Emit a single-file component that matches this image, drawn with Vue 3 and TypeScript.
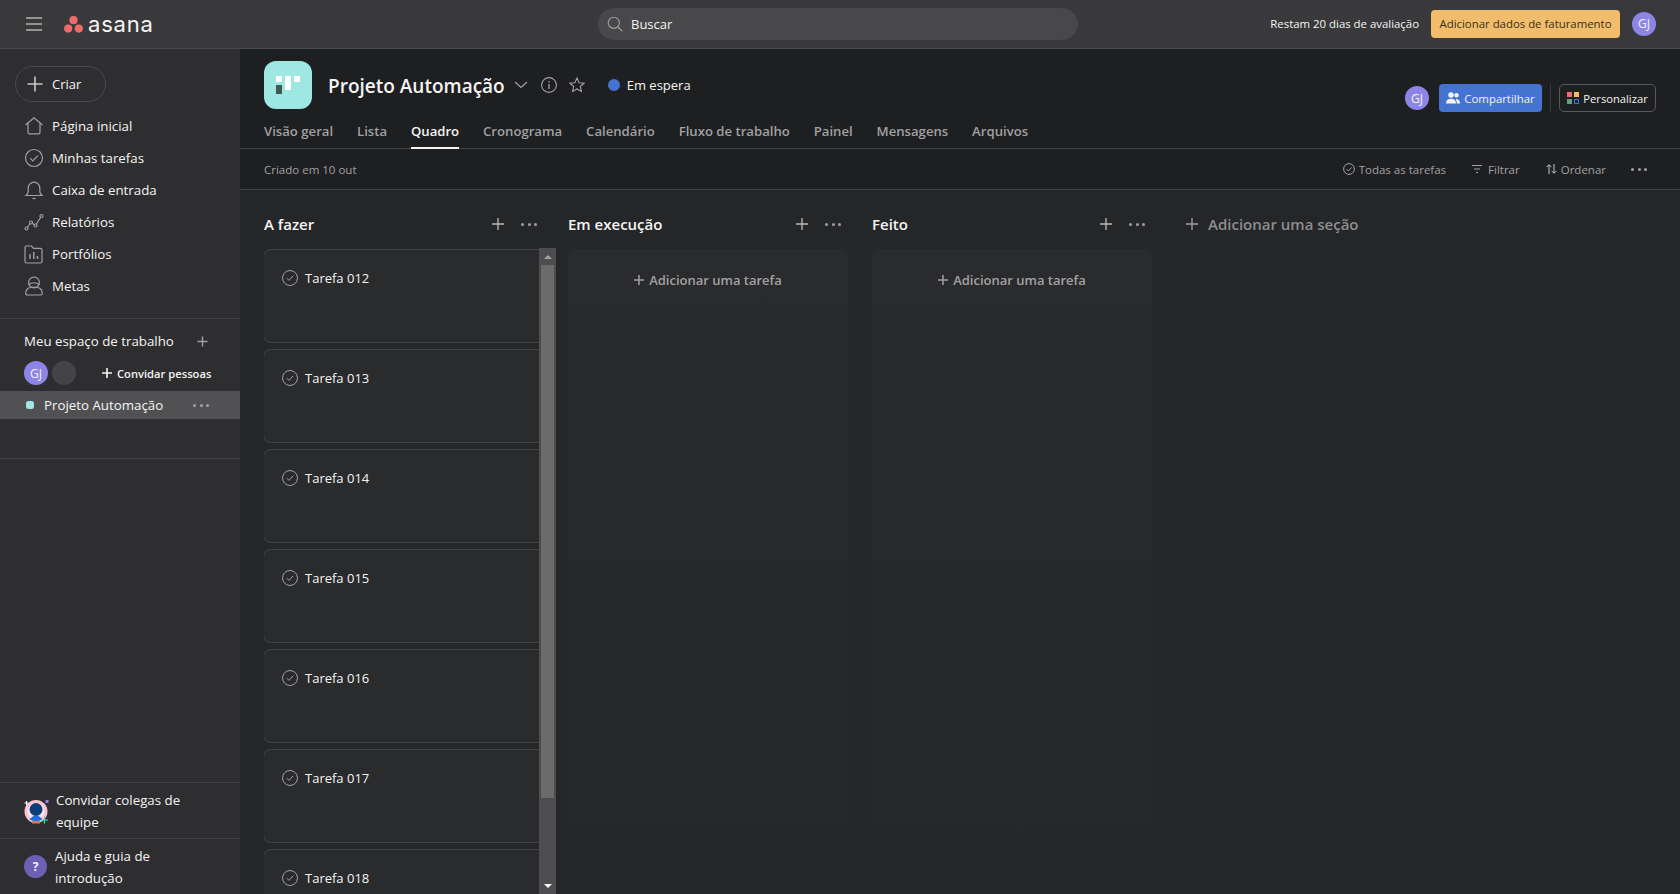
<script setup lang="ts">
const navItems = [
  { label: 'Página inicial', icon: 'home' },
  { label: 'Minhas tarefas', icon: 'check' },
  { label: 'Caixa de entrada', icon: 'bell' },
  { label: 'Relatórios', icon: 'chart' },
  { label: 'Portfólios', icon: 'folder' },
  { label: 'Metas', icon: 'goal' },
]

const tabs = ['Visão geral', 'Lista', 'Quadro', 'Cronograma', 'Calendário', 'Fluxo de trabalho', 'Painel', 'Mensagens', 'Arquivos']

const tasks = ['Tarefa 012', 'Tarefa 013', 'Tarefa 014', 'Tarefa 015', 'Tarefa 016', 'Tarefa 017', 'Tarefa 018']

const emptyColumns = ['Em execução', 'Feito']
</script>

<template>
  <div class="app">
    <header class="topbar">
      <div class="top-left">
        <svg class="burger" width="16" height="14" viewBox="0 0 16 14">
          <path d="M0 1h16M0 7h16M0 13h16" stroke="#f0f0f0" stroke-width="1" fill="none" />
        </svg>
        <div class="logo">
          <svg width="19" height="17" viewBox="0 0 19 17">
            <circle cx="9.5" cy="4.2" r="4.1" fill="#f06a6a" />
            <circle cx="4.2" cy="12.6" r="4.1" fill="#f06a6a" />
            <circle cx="14.8" cy="12.6" r="4.1" fill="#f06a6a" />
          </svg>
          <span class="wordmark">asana</span>
        </div>
      </div>
      <div class="search">
        <svg width="16" height="16" viewBox="0 0 16 16" fill="none" stroke="#a2a0a2" stroke-width="1.1">
          <circle cx="6.8" cy="6.8" r="5.6" />
          <path d="M11 11l4.4 4.4" />
        </svg>
        <span>Buscar</span>
      </div>
      <div class="top-right">
        <span class="trial">Restam 20 dias de avaliação</span>
        <button class="billing">Adicionar dados de faturamento</button>
        <span class="avatar">GJ</span>
      </div>
    </header>

    <div class="body">
      <aside class="sidebar">
        <div class="sidebar-top">
          <button class="create">
            <svg width="16" height="16" viewBox="0 0 16 16"><path d="M8 .5v15M.5 8h15" stroke="#c8c8c8" stroke-width="1.6" /></svg>
            <span>Criar</span>
          </button>
          <nav class="nav">
            <a v-for="item in navItems" :key="item.label" class="nav-item">
              <svg width="20" height="20" viewBox="0 0 20 20" fill="none" stroke="#a2a0a2" stroke-width="1.2">
                <path v-if="item.icon === 'home'" d="M1.5 9 10 1.8 18.5 9M4 7v9.2q0 1.6 1.6 1.6h8.8q1.6 0 1.6-1.6V7" />
                <template v-else-if="item.icon === 'check'">
                  <circle cx="10" cy="10" r="8.5" />
                  <path d="M6.2 10.2 8.8 12.8 13.8 7.6" />
                </template>
                <template v-else-if="item.icon === 'bell'">
                  <path d="M2 15.5q2.2-1.6 2.2-4.5V8a5.8 5.8 0 0 1 11.6 0v3q0 2.9 2.2 4.5Z" />
                  <path d="M8.5 18.5h3" />
                </template>
                <template v-else-if="item.icon === 'chart'">
                  <path d="M2.5 16.5 7 10.5 11.5 13.5 17.5 4" />
                  <circle cx="2.5" cy="16.5" r="1.5" fill="#2e2e30" />
                  <circle cx="7" cy="10.5" r="1.5" fill="#2e2e30" />
                  <circle cx="11.5" cy="13.5" r="1.5" fill="#2e2e30" />
                  <circle cx="17.5" cy="4" r="1.5" fill="#2e2e30" />
                </template>
                <template v-else-if="item.icon === 'folder'">
                  <path d="M2.5 2h5l2 2.4h7q1.5 0 1.5 1.5v11.6q0 1.5-1.5 1.5h-14Q1 19 1 17.5v-14Q1 2 2.5 2Z" />
                  <path d="M6 15v-5M9.8 15V8M13.5 15v-3" stroke-width="1.4" />
                </template>
                <template v-else>
                  <circle cx="10" cy="6.5" r="5.4" />
                  <path d="M4.5 8.5q5.500-3.500 11 0" />
                  <path d="M3.5 19q-1.8 0-1.8-1.8 0-6.2 8.3-6.2t8.3 6.2q0 1.8-1.8 1.8Z" />
                </template>
              </svg>
              <span>{{ item.label }}</span>
            </a>
          </nav>
          <div class="workspace">
            <div class="workspace-title">
              <span>Meu espaço de trabalho</span>
              <svg width="11" height="11" viewBox="0 0 11 11"><path d="M5.5 .5v10M.5 5.5h10" stroke="#a2a0a2" stroke-width="1.4" /></svg>
            </div>
            <div class="workspace-people">
              <span class="avatar">GJ</span>
              <span class="avatar ghost"></span>
              <span class="invite">
                <svg width="10" height="10" viewBox="0 0 10 10"><path d="M5 0v10M0 5h10" stroke="#f5f4f3" stroke-width="1.6" /></svg>
                Convidar pessoas
              </span>
            </div>
            <div class="project-row">
              <span class="project-dot"></span>
              <span class="project-name">Projeto Automação</span>
              <span class="dots small">
                <i></i><i></i><i></i>
              </span>
            </div>
          </div>
        </div>
        <div class="sidebar-bottom">
          <div class="bottom-row">
            <svg class="invite-art" width="26" height="26" viewBox="0 0 26 26">
              <circle cx="12" cy="13.5" r="10" fill="#f9e4ea" stroke="#f9c4d2" stroke-width="3" />
              <circle cx="12" cy="11.5" r="6.5" fill="#0b3f7a" />
              <path d="M5.5 21.5q6.5-8 13 0-6.500 3-13 0Z" fill="#1272e0" />
              <path d="M8 23h8v2.5H8z" fill="#f06a6a" />
              <path d="M2.5 3v4M.5 5h4" stroke="#fff" stroke-width="1" />
              <rect x="21.5" y="2" width="3" height="3" fill="#8d84e8" />
              <path d="M20.5 18.5v7M17 22h7" stroke="#3ee0b8" stroke-width="1.2" />
            </svg>
            <span>Convidar colegas de equipe</span>
          </div>
          <div class="bottom-row help">
            <span class="help-mark">?</span>
            <span>Ajuda e guia de introdução</span>
          </div>
        </div>
      </aside>

      <main class="main">
        <section class="project-head">
          <div class="head-top">
            <div class="project-id">
              <div class="project-icon">
                <svg width="48" height="48" viewBox="0 0 48 48">
                  <rect x="12" y="15" width="6" height="6" fill="#fff" />
                  <rect x="21" y="15" width="6" height="14" fill="#fff" />
                  <rect x="30" y="15" width="6" height="6" fill="#fff" />
                  <rect x="12" y="24" width="6" height="9" fill="#3d5a58" />
                </svg>
              </div>
              <h1>Projeto Automação</h1>
              <svg class="chev" width="14" height="8" viewBox="0 0 14 8" fill="none"><path d="M1 1l6 5.5L13 1" stroke="#a2a0a2" stroke-width="1.2" /></svg>
              <svg class="head-ic" width="16" height="16" viewBox="0 0 16 16" fill="none" stroke="#a2a0a2" stroke-width="1.1">
                <circle cx="8" cy="8" r="7.4" />
                <path d="M8 7v5M8 4v1.4" stroke-width="1.3" />
              </svg>
              <svg class="head-ic" width="16" height="16" viewBox="0 0 16 16" fill="none" stroke="#a2a0a2" stroke-width="1.1">
                <path d="M8 1l2.1 4.7 5 .5-3.800 3.300 1.100 5L8 12l-4.400 2.500 1.100-5L.9 6.200l5-.5Z" />
              </svg>
              <span class="status"><i></i>Em espera</span>
            </div>
            <div class="head-actions">
              <span class="avatar">GJ</span>
              <button class="share">
                <svg width="14" height="12" viewBox="0 0 14 12" fill="#f5f4f3">
                  <circle cx="5" cy="3" r="2.7" />
                  <path d="M0 11.5q0-4.8 5-4.8t5 4.8Z" />
                  <circle cx="10.5" cy="3.2" r="2.2" />
                  <path d="M10.8 11.5H14q0-4.500-4.300-4.500 1.100 1.700 1.100 4.500Z" />
                </svg>
                Compartilhar
              </button>
              <span class="head-sep"></span>
              <button class="customize">
                <svg width="12" height="12" viewBox="0 0 12 12">
                  <rect width="5" height="5" fill="#f06a6a" />
                  <rect x="7" width="5" height="5" fill="#f1bd6c" />
                  <rect y="7" width="5" height="5" fill="#5da283" />
                  <rect x="7.5" y="7.5" width="4" height="4" fill="none" stroke="#4573d2" />
                </svg>
                Personalizar
              </button>
            </div>
          </div>
          <nav class="tabs">
            <a v-for="tab in tabs" :key="tab" class="tab" :class="{ active: tab === 'Quadro' }">{{ tab }}</a>
          </nav>
        </section>

        <section class="toolbar">
          <span>Criado em 10 out</span>
          <div class="tools">
            <span class="tool">
              <svg width="12" height="12" viewBox="0 0 12 12" fill="none" stroke="#a2a0a2" stroke-width="1">
                <circle cx="6" cy="6" r="5.4" />
                <path d="M3.6 6.2 5.3 7.9 8.5 4.5" />
              </svg>
              Todas as tarefas
            </span>
            <span class="tool filter">
              <svg width="10" height="8" viewBox="0 0 10 8"><path d="M0 .5h10M2 4h6M4 7.5h2" stroke="#a2a0a2" stroke-width="1" /></svg>
              Filtrar
            </span>
            <span class="tool sort">
              <svg width="11" height="10" viewBox="0 0 11 10" fill="none"><path d="M3 10V1M.5 3.2 3 .7l2.5 2.5M8 0v9M5.500 6.800 8 9.300l2.500-2.500" stroke="#c4c4c4" stroke-width="1" /></svg>
              Ordenar
            </span>
            <span class="dots"><i></i><i></i><i></i></span>
          </div>
        </section>

        <section class="board">
          <div class="column first">
            <div class="column-head">
              <h2>A fazer</h2>
              <svg width="12" height="12" viewBox="0 0 12 12"><path d="M6 0v12M0 6h12" stroke="#b8b8b8" stroke-width="1.3" /></svg>
              <span class="dots"><i></i><i></i><i></i></span>
            </div>
            <div class="column-body">
              <div class="cards">
                <article v-for="task in tasks" :key="task" class="card">
                  <svg width="16" height="16" viewBox="0 0 16 16" fill="none" stroke="#a2a0a2" stroke-width="1">
                    <circle cx="8" cy="8" r="7.5" />
                    <path d="M4.8 8.2 7 10.4 11.2 5.8" />
                  </svg>
                  <span>{{ task }}</span>
                </article>
              </div>
              <div class="scrollbar">
                <span class="arrow up"></span>
                <span class="thumb"></span>
                <span class="arrow down"></span>
              </div>
            </div>
          </div>

          <div v-for="col in emptyColumns" :key="col" class="column">
            <div class="column-head">
              <h2>{{ col }}</h2>
              <svg width="12" height="12" viewBox="0 0 12 12"><path d="M6 0v12M0 6h12" stroke="#b8b8b8" stroke-width="1.3" /></svg>
              <span class="dots"><i></i><i></i><i></i></span>
            </div>
            <div class="empty-body">
              <span class="add-task">
                <svg width="10" height="10" viewBox="0 0 10 10"><path d="M5 0v10M0 5h10" stroke="#a2a0a2" stroke-width="1.5" /></svg>
                Adicionar uma tarefa
              </span>
            </div>
          </div>

          <div class="add-section">
            <svg width="12" height="12" viewBox="0 0 12 12"><path d="M6 0v12M0 6h12" stroke="#a2a0a2" stroke-width="1.3" /></svg>
            Adicionar uma seção
          </div>
        </section>
      </main>
    </div>
  </div>
</template>

<style>
html,
body {
  margin: 0;
  background: #1e1f21;
  overflow: hidden;
}
</style>

<style scoped>
.app {
  width: 1680px;
  height: 894px;
  display: flex;
  flex-direction: column;
  overflow: hidden;
  font-family: "Open Sans", "Noto Sans", sans-serif;
  font-size: 13.3px;
  color: #f5f4f3;
}

svg {
  flex: none;
  display: block;
}

button {
  font: inherit;
  border: 0;
  cursor: pointer;
}

.topbar {
  flex: none;
  height: 49px;
  box-sizing: border-box;
  border-bottom: 1px solid #4a4a4c;
  background: #39393b;
  display: grid;
  grid-template-columns: 1fr 480px 1fr;
  align-items: center;
  padding-left: 26px;
  padding-right: 24px;
}

.top-left {
  display: flex;
  align-items: center;
  gap: 22px;
}

.logo {
  display: flex;
  align-items: center;
  gap: 5px;
}

.wordmark {
  font-family: Inter, sans-serif;
  font-size: 22px;
  line-height: 24px;
  letter-spacing: 0.8px;
  color: #f5f4f3;
  margin-top: -1px;
}

.search {
  height: 32px;
  width: 480px;
  margin-top: -1px;
  margin-left: -3px;
  box-sizing: border-box;
  padding-left: 9px;
  border-radius: 16px;
  background: #48484a;
  display: flex;
  align-items: center;
  gap: 8px;
  font-size: 13px;
}

.top-right {
  display: flex;
  align-items: center;
  justify-content: flex-end;
  gap: 12px;
  margin-top: -1px;
}

.trial {
  font-size: 11.4px;
  white-space: nowrap;
}

.billing {
  height: 28px;
  width: 189px;
  padding: 0;
  border-radius: 4px;
  background: #f1bd6c;
  color: #3a2f1c;
  font-size: 11.4px;
  white-space: nowrap;
}

.avatar {
  flex: none;
  width: 24px;
  height: 24px;
  border-radius: 50%;
  background: #8d84e8;
  color: #f5f4f3;
  font-size: 12px;
  display: flex;
  align-items: center;
  justify-content: center;
}

.avatar.ghost {
  background: #444446;
}

.body {
  flex: 1;
  min-height: 0;
  display: flex;
}

.sidebar {
  flex: none;
  width: 240px;
  background: #2e2e30;
  display: flex;
  flex-direction: column;
  justify-content: space-between;
}

.create {
  margin: 17px 0 0 15px;
  width: 91px;
  height: 36px;
  box-sizing: border-box;
  padding-left: 11px;
  border: 1px solid #4a4a4c;
  border-radius: 18px;
  background: transparent;
  color: #f5f4f3;
  display: flex;
  align-items: center;
  gap: 9px;
  font-size: 13px;
}

.nav {
  margin-top: 8px;
  padding-bottom: 16px;
  border-bottom: 1px solid #424244;
}

.nav-item {
  height: 32px;
  padding-left: 24px;
  display: flex;
  align-items: center;
  gap: 8px;
}

.workspace {
  padding-top: 10px;
  padding-bottom: 39px;
  border-bottom: 1px solid #424244;
}

.workspace-title {
  height: 24px;
  padding: 0 32px 0 24px;
  display: flex;
  align-items: center;
  justify-content: space-between;
}

.workspace-people {
  height: 24px;
  margin-top: 8px;
  padding-left: 24px;
  display: flex;
  align-items: center;
  gap: 4px;
}

.invite {
  margin-left: 22px;
  display: flex;
  align-items: center;
  gap: 5px;
  font-size: 11.2px;
  font-weight: 600;
  white-space: nowrap;
}

.project-row {
  height: 28px;
  margin-top: 6px;
  padding: 0 31px 0 26px;
  background: #515153;
  display: flex;
  align-items: center;
}

.project-dot {
  width: 8px;
  height: 8px;
  border-radius: 2.5px;
  background: #9ee7e3;
  margin-right: 10px;
}

.project-name {
  flex: 1;
}

.dots {
  display: flex;
  gap: 3.5px;
  align-items: center;
}

.dots i {
  width: 3px;
  height: 3px;
  border-radius: 50%;
  background: #a2a0a2;
}

.bottom-row {
  height: 56px;
  box-sizing: border-box;
  border-top: 1px solid #424244;
  padding: 0 24px;
  display: flex;
  align-items: center;
  gap: 8px;
  line-height: 22px;
}

.invite-art {
  margin-right: -2px;
}

.help-mark {
  flex: none;
  width: 23px;
  height: 23px;
  border-radius: 50%;
  background: #6d5fb3;
  font-size: 12px;
  font-weight: 700;
  display: flex;
  align-items: center;
  justify-content: center;
}

.main {
  flex: 1;
  min-width: 0;
  display: flex;
  flex-direction: column;
  background: #1e1f21;
}

.project-head {
  flex: none;
  height: 100px;
  box-sizing: border-box;
  border-bottom: 1px solid #424244;
  padding: 12px 24px 0;
  display: flex;
  flex-direction: column;
}

.head-top {
  height: 48px;
  display: flex;
  justify-content: space-between;
}

.project-id {
  display: flex;
  align-items: center;
}

.project-icon {
  width: 48px;
  height: 48px;
  border-radius: 12px;
  background: #9ee7e3;
  margin-right: 16px;
}

h1 {
  margin: 0 9px 0 0;
  font-size: 19px;
  font-weight: 600;
  line-height: 26px;
  padding-top: 2px;
  white-space: nowrap;
}

.chev {
  margin-right: 13px;
}

.head-ic {
  margin-right: 12px;
}

.status {
  display: flex;
  align-items: center;
  gap: 7px;
  margin-left: 11px;
  font-size: 13px;
}

.status i {
  width: 12px;
  height: 12px;
  border-radius: 50%;
  background: #4573d2;
}

.head-actions {
  margin-top: 23px;
  display: flex;
  align-items: center;
  height: 28px;
}

.share {
  margin-left: 10px;
  width: 103px;
  height: 28px;
  border-radius: 4px;
  background: #4573d2;
  color: #f5f4f3;
  font-size: 11.4px;
  display: flex;
  align-items: center;
  justify-content: center;
  gap: 4px;
}

.head-sep {
  width: 1px;
  height: 28px;
  background: #3a3a3c;
  margin: 0 8px;
}

.customize {
  width: 97px;
  height: 28px;
  box-sizing: border-box;
  border: 1px solid #58585a;
  border-radius: 5px;
  background: transparent;
  color: #f5f4f3;
  font-size: 11.2px;
  display: flex;
  align-items: center;
  justify-content: center;
  gap: 4px;
}

.tabs {
  margin-top: 8px;
  display: flex;
  gap: 23.9px;
}

.tab {
  height: 32px;
  box-sizing: border-box;
  padding-top: 3px;
  color: #a2a0a2;
  font-size: 13.15px;
  font-weight: 600;
  line-height: 22px;
  white-space: nowrap;
}

.tab.active {
  color: #f5f4f3;
  border-bottom: 2px solid #f5f4f3;
}

.toolbar {
  flex: none;
  height: 41px;
  box-sizing: border-box;
  border-bottom: 1px solid #424244;
  padding: 0 33px 0 24px;
  display: flex;
  align-items: center;
  justify-content: space-between;
  font-size: 11.5px;
  color: #a2a0a2;
}

.tools {
  display: flex;
  align-items: center;
}

.tool {
  display: flex;
  align-items: center;
  gap: 4px;
  font-weight: 500;
}

.filter {
  margin-left: 26px;
  gap: 6px;
}

.sort {
  margin-left: 26px;
}

.tools .dots {
  margin-left: 25px;
}

.board {
  flex: 1;
  min-height: 0;
  background: #252628;
  display: flex;
  padding-left: 24px;
  overflow: hidden;
}

.column {
  flex: none;
  width: 280px;
  margin-right: 24px;
  display: flex;
  flex-direction: column;
}

.column.first {
  width: 292px;
  margin-right: 12px;
}

.column-head {
  flex: none;
  height: 58px;
  box-sizing: border-box;
  padding-top: 10px;
  padding-right: 7px;
  display: flex;
  align-items: center;
  gap: 17px;
}

.column.first .column-head {
  padding-right: 19px;
}

h2 {
  flex: 1;
  margin: 0;
  font-size: 15px;
  font-weight: 600;
}

.column-body {
  flex: 1;
  min-height: 0;
  display: flex;
}

.cards {
  flex: 1;
  min-width: 0;
  display: flex;
  flex-direction: column;
  gap: 6px;
  padding-top: 1px;
  overflow: hidden;
}

.card {
  flex: none;
  height: 94px;
  box-sizing: border-box;
  padding: 20px 16px 0 18px;
  margin-left: -1px;
  background: #2a2b2d;
  border: 1px solid #424244;
  border-right: 0;
  border-radius: 8px 0 0 8px;
  display: flex;
  align-items: flex-start;
  gap: 7px;
  font-size: 13px;
  line-height: 16px;
}

.scrollbar {
  flex: none;
  width: 17px;
  background: #4d4d4f;
  display: flex;
  flex-direction: column;
  align-items: center;
}

.arrow {
  flex: none;
  width: 0;
  height: 0;
  border-left: 4px solid transparent;
  border-right: 4px solid transparent;
}

.arrow.up {
  margin: 7px 0 6px;
  border-bottom: 4px solid #a3a3a3;
}

.arrow.down {
  margin-top: 86px;
  border-top: 4px solid #fff;
}

.thumb {
  flex: none;
  width: 13px;
  height: 533px;
  background: #6b6b6b;
}

.empty-body {
  flex: 1;
  margin-top: 1px;
  border-radius: 8px 8px 0 0;
  background: linear-gradient(#2a2b2d, #262729);
  padding-top: 22px;
  display: flex;
  justify-content: center;
  align-items: flex-start;
}

.add-task {
  display: flex;
  align-items: center;
  gap: 5px;
  font-size: 13px;
  font-weight: 600;
  color: #a2a0a2;
}

.add-section {
  flex: none;
  height: 58px;
  box-sizing: border-box;
  padding-top: 10px;
  margin-left: 10px;
  display: flex;
  align-items: center;
  gap: 10px;
  color: #8e8d8f;
  font-size: 15px;
  font-weight: 600;
}
</style>
